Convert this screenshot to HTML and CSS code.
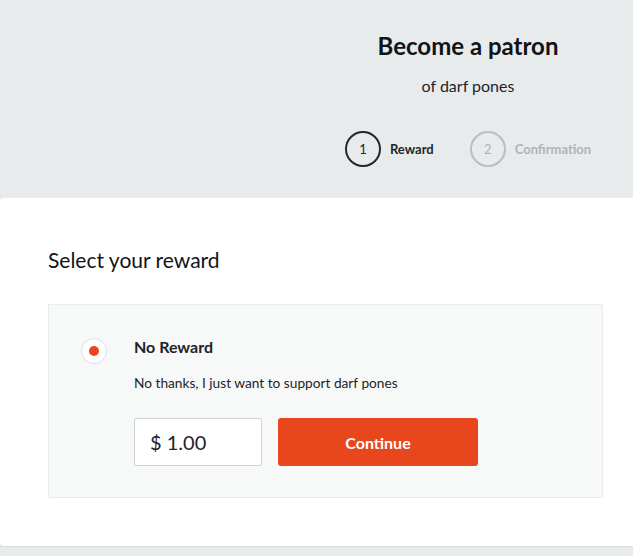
FILE: index.html
```html
<!DOCTYPE html>
<html>
<head>
<meta charset="utf-8">
<link rel="stylesheet" href="styles.css">
</head>
<body>
<div class="page">
  <header class="header">
    <h1 class="title">Become a patron</h1>
    <p class="subtitle">of darf pones</p>
    <div class="steps">
      <div class="step active"><span class="step-num">1</span><span class="step-label">Reward</span></div>
      <div class="step"><span class="step-num">2</span><span class="step-label">Confirmation</span></div>
    </div>
  </header>
  <main class="card">
    <h2 class="section-title">Select your reward</h2>
    <div class="reward">
      <div class="radio"><span class="radio-dot"></span></div>
      <div class="reward-body">
        <div class="reward-name">No Reward</div>
        <div class="reward-desc">No thanks, I just want to support darf pones</div>
        <div class="actions">
          <div class="amount">$ 1.00</div>
          <button class="continue">Continue</button>
        </div>
      </div>
    </div>
  </main>
</div>
</body>
</html>
```
FILE: styles.css
```css
* { box-sizing: border-box; }
html, body { margin: 0; padding: 0; }
body {
  background: #e8ebec;
  font-family: Lato, "Open Sans", sans-serif;
  color: #1f2327;
  width: 633px;
  height: 556px;
  overflow: hidden;
}
.page { width: 633px; }
.header {
  padding-left: 303px;
  padding-top: 31px;
  height: 198px;
  text-align: center;
}
.title {
  margin: 0;
  font-size: 24px;
  font-weight: 700;
  line-height: 30px;
  color: #111417;
}
.subtitle {
  margin: 0;
  margin-top: 15px;
  font-size: 16px;
  line-height: 20px;
  color: #1f2327;
}
.steps {
  display: flex;
  justify-content: center;
  gap: 36px;
  margin-top: 35px;
}
.step {
  display: flex;
  align-items: center;
  gap: 9px;
  color: #aeb3b6;
}
.step-num {
  width: 36px;
  height: 36px;
  border-radius: 50%;
  border: 2px solid #b9bec1;
  display: flex;
  align-items: center;
  justify-content: center;
  font-size: 13px;
  font-weight: 400;
}
.step-label {
  font-size: 13px;
  font-weight: 700;
}
.step.active { color: #22272b; }
.step.active .step-num { border-color: #22272b; }
.card {
  background: #fff;
  border-radius: 3px 0 0 3px;
  height: 348px;
  padding: 48px 30px 0 48px;
  box-shadow: 0 1px 1px rgba(0,0,0,0.06);
}
.section-title {
  margin: 0;
  font-size: 21px;
  font-weight: 400;
  line-height: 28px;
  color: #111417;
}
.reward {
  margin-top: 30px;
  width: 555px;
  height: 194px;
  background: #f7f8f8;
  border: 1px solid #e9ebec;
  display: flex;
  padding: 32px 0 0 32px;
}
.radio {
  width: 26px;
  height: 26px;
  border-radius: 50%;
  background: #fff;
  border: 1px solid #dcdfe1;
  display: flex;
  align-items: center;
  justify-content: center;
  margin-top: 1px;
  flex-shrink: 0;
}
.radio-dot {
  width: 10px;
  height: 10px;
  border-radius: 50%;
  background: #e8461c;
}
.reward-body { margin-left: 27px; }
.reward-name {
  font-size: 16px;
  font-weight: 700;
  line-height: 20px;
  color: #1f2327;
}
.reward-desc {
  margin-top: 17px;
  font-size: 13.7px;
  line-height: 18px;
  color: #1f2327;
}
.actions {
  display: flex;
  gap: 16px;
  margin-top: 26px;
}
.amount {
  width: 128px;
  height: 48px;
  background: #fff;
  border: 1px solid #cdd2d5;
  border-radius: 2px;
  padding-left: 15px;
  display: flex;
  align-items: center;
  font-size: 20px;
  color: #1f2327;
}
.continue {
  width: 200px;
  height: 48px;
  border: none;
  border-radius: 3px;
  background: #e8461c;
  color: #fff;
  font-family: Lato, "Open Sans", sans-serif;
  font-size: 16px;
  font-weight: 700;
}
```
